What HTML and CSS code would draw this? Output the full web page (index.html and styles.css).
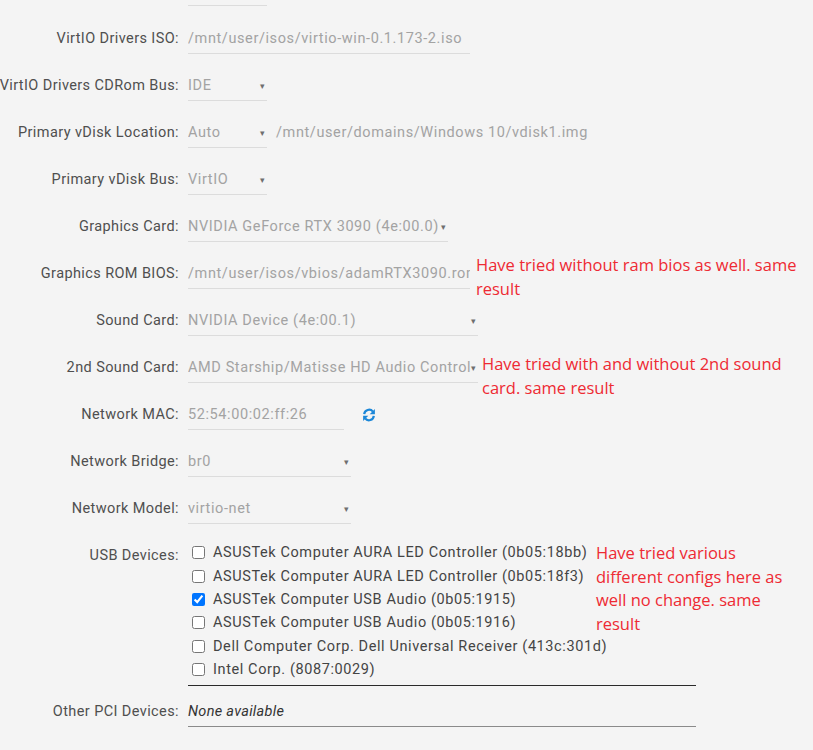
FILE: index.html
```html
<!DOCTYPE html>
<html lang="en">
<head>
    <meta charset="UTF-8">
    <meta name="viewport" content="width=device-width, initial-scale=1.0">
    <title>VM Settings</title>
    <link rel="stylesheet" href="styles.css">
</head>
<body>
    <main class="form">
        <!-- tail of the field above -->
        <div class="cut"></div>

        <div class="row">
            <div class="label">VirtIO Drivers ISO:</div>
            <div class="field w-iso"><span class="val">/mnt/user/isos/virtio-win-0.1.173-2.iso</span></div>
        </div>

        <div class="row">
            <div class="label">VirtIO Drivers CDRom Bus:</div>
            <div class="field select w-short"><span class="val">IDE</span><span class="caret">▾</span></div>
        </div>

        <div class="row">
            <div class="label">Primary vDisk Location:</div>
            <div class="field select w-short"><span class="val">Auto</span><span class="caret">▾</span></div>
            <span class="path">/mnt/user/domains/Windows 10/vdisk1.img</span>
        </div>

        <div class="row">
            <div class="label">Primary vDisk Bus:</div>
            <div class="field select w-short"><span class="val">VirtIO</span><span class="caret">▾</span></div>
        </div>

        <div class="row">
            <div class="label">Graphics Card:</div>
            <div class="field select w-gpu"><span class="val">NVIDIA GeForce RTX 3090 (4e:00.0)</span><span class="caret">▾</span></div>
        </div>

        <div class="row">
            <div class="label">Graphics ROM BIOS:</div>
            <div class="field w-iso"><span class="val">/mnt/user/isos/vbios/adamRTX3090.rom</span></div>
            <p class="note note-bios">Have tried without ram bios as well. same<br>result</p>
        </div>

        <div class="row">
            <div class="label">Sound Card:</div>
            <div class="field select w-sound"><span class="val">NVIDIA Device (4e:00.1)</span><span class="caret">▾</span></div>
        </div>

        <div class="row">
            <div class="label">2nd Sound Card:</div>
            <div class="field select w-sound"><span class="val">AMD Starship/Matisse HD Audio Controller</span><span class="caret">▾</span></div>
            <p class="note note-sound">Have tried with and without 2nd sound<br>card. same result</p>
        </div>

        <div class="row">
            <div class="label">Network MAC:</div>
            <div class="field w-mac"><span class="val">52:54:00:02:ff:26</span></div>
            <svg class="refresh" width="14" height="14" viewBox="0 0 14 14">
                <path d="M2.2 6.2A4.9 4.9 0 0 1 10.9 3.6" fill="none" stroke="#1b87d8" stroke-width="2.2"/>
                <path d="M12.9 1v5.2H7.7z" fill="#1b87d8"/>
                <path d="M11.8 7.8A4.9 4.9 0 0 1 3.1 10.4" fill="none" stroke="#1b87d8" stroke-width="2.2"/>
                <path d="M1.1 13V7.8h5.2z" fill="#1b87d8"/>
            </svg>
        </div>

        <div class="row">
            <div class="label">Network Bridge:</div>
            <div class="field select w-net"><span class="val">br0</span><span class="caret">▾</span></div>
        </div>

        <div class="row">
            <div class="label">Network Model:</div>
            <div class="field select w-net"><span class="val">virtio-net</span><span class="caret">▾</span></div>
        </div>

        <div class="row row-usb">
            <div class="label">USB Devices:</div>
            <div class="usb-list">
                <label class="usb"><input type="checkbox">ASUSTek Computer AURA LED Controller (0b05:18bb)</label>
                <label class="usb"><input type="checkbox">ASUSTek Computer AURA LED Controller (0b05:18f3)</label>
                <label class="usb"><input type="checkbox" checked>ASUSTek Computer USB Audio (0b05:1915)</label>
                <label class="usb"><input type="checkbox">ASUSTek Computer USB Audio (0b05:1916)</label>
                <label class="usb"><input type="checkbox">Dell Computer Corp. Dell Universal Receiver (413c:301d)</label>
                <label class="usb"><input type="checkbox">Intel Corp. (8087:0029)</label>
                <p class="note note-usb">Have tried various<br>different configs here as<br>well no change. same<br>result</p>
            </div>
        </div>

        <div class="row row-pci">
            <div class="label">Other PCI Devices:</div>
            <div class="field w-wide pci"><span>None available</span></div>
        </div>
    </main>
</body>
</html>
```

FILE: styles.css
```css
body {
    margin: 0;
    background-color: #f4f4f4;
    font-family: Roboto, "Liberation Sans", sans-serif;
    font-size: 14.5px;
    letter-spacing: 0.4px;
    color: #4f4f4f;
    overflow: hidden;
}
.form {
    padding: 0;
}
.cut {
    width: 79px;
    height: 5px;
    margin: 0 0 18px 188px;
    border-bottom: 1px solid #dcdcdc;
}
.row {
    display: flex;
    align-items: flex-start;
    height: 47px;
}
.label {
    display: flex;
    justify-content: flex-end;
    width: 179px;
    flex: none;
    line-height: 29px;
    margin-right: 9px;
    white-space: nowrap;
}
.field {
    display: flex;
    align-items: center;
    justify-content: space-between;
    height: 29px;
    border-bottom: 1px solid #dcdcdc;
    color: #a3a3a3;
    letter-spacing: 0.6px;
    overflow: hidden;
    white-space: nowrap;
    flex: none;
}
.field .val {
    overflow: hidden;
    min-width: 0;
}
.caret {
    font-size: 9px;
    color: #6f6f6f;
    flex: none;
    padding-right: 1px;
}
.w-short { width: 79px; }
.w-iso { width: 282px; }
.w-gpu { width: 260px; }
.w-sound { width: 290px; }
.w-mac { width: 156px; }
.w-net { width: 163px; }
.w-wide { width: 508px; }
.path {
    color: #a3a3a3;
    letter-spacing: 0.6px;
    line-height: 29px;
    margin-left: 9px;
    white-space: nowrap;
}
.refresh {
    margin: 8px 0 0 18px;
}
.note {
    margin: 0;
    font-family: "Open Sans", sans-serif;
    font-size: 16.5px;
    letter-spacing: 0;
    line-height: 23.5px;
    color: #ee2a33;
    white-space: nowrap;
}
.note-bios {
    margin: -6px 0 0 6px;
}
.note-sound {
    margin: -1px 0 0 4px;
}
.row-usb {
    height: auto;
}
.usb-list {
    position: relative;
    width: 508px;
    padding-bottom: 4px;
    border-bottom: 1px solid #2a2a2a;
}
.usb {
    display: flex;
    align-items: center;
    height: 23.4px;
    color: #444;
    letter-spacing: 0.6px;
    white-space: nowrap;
}
.usb input {
    width: 13px;
    height: 13px;
    margin: 0 8px 0 4px;
}
.note-usb {
    position: absolute;
    left: 408px;
    top: 0;
}
.row-pci {
    margin-top: 11px;
}
.pci {
    border-bottom-color: #8a8a8a;
    color: #333;
    font-style: italic;
    letter-spacing: 0.3px;
}
```
